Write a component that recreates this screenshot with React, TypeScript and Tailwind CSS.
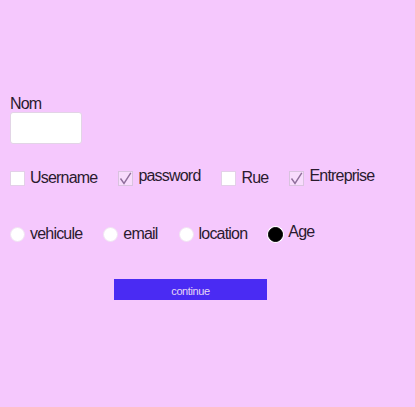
import React, { useState } from 'react';

const font = { fontFamily: '"Liberation Sans", Arial, sans-serif' };

function Check({ label, checked }: { label: string; checked?: boolean }) {
  return (
    <label className="flex items-center gap-[5px]">
      <span
        className={`w-[15px] h-[15px] flex items-center justify-center border ${
          checked ? 'border-[#d9c3df] bg-[#f8dcfd]' : 'border-[#e3d0e8] bg-white'
        }`}
      >
        {checked && (
          <svg width="13" height="13" viewBox="0 0 13 13" fill="none">
            <path d="M1.5 6.5 L5 11.5 L11.8 0.8" stroke="#8f6e9b" strokeWidth="1.4" />
          </svg>
        )}
      </span>
      <span className={`text-[16px] leading-[18px] tracking-[-0.8px] text-[#2a1a2e] ${checked ? 'mb-[5px]' : ''}`}>
        {label}
      </span>
    </label>
  );
}

function Radio({ label, checked }: { label: string; checked?: boolean }) {
  return (
    <label className="flex items-center gap-[5px]">
      <span
        className={`w-[15px] h-[15px] rounded-full border ${
          checked ? 'bg-black border-black ring-1 ring-white' : 'bg-white border-[#f0e4f2]'
        }`}
      />
      <span className={`text-[16px] leading-[18px] tracking-[-0.8px] text-[#2a1a2e] ${checked ? 'mb-[4px]' : ''}`}>
        {label}
      </span>
    </label>
  );
}

export default function App() {
  const [nom, setNom] = useState('');

  return (
    <div className="min-h-screen bg-[#f5c8fd] pt-[96px] pl-[10px]" style={font}>
      <div className="text-[16px] leading-[16px] tracking-[-0.8px] text-[#2a1a2e]">Nom</div>
      <input
        value={nom}
        onChange={(e) => setNom(e.target.value)}
        className="block w-[72px] h-[32px] bg-white border border-[#e2d4e6] rounded-[3px] outline-none"
      />

      {/* checkboxes */}
      <div className="mt-[24px] h-[20px] flex items-center gap-[21px]">
        <Check label="Username" />
        <Check label="password" checked />
        <Check label="Rue" />
        <Check label="Entreprise" checked />
      </div>

      {/* radios */}
      <div className="mt-[36px] h-[20px] flex items-center gap-[21px]">
        <Radio label="vehicule" />
        <Radio label="email" />
        <Radio label="location" />
        <Radio label="Age" checked />
      </div>

      <button className="mt-[35px] ml-[104px] w-[153px] h-[21px] bg-[#4a2bf3] text-[11px] leading-[24px] text-[#e6d6f4] tracking-[-0.4px]">
        continue
      </button>
    </div>
  );
}
